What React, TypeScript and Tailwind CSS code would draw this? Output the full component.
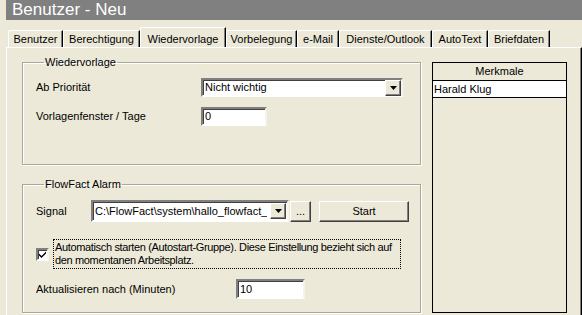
import React from "react";

const tabs = [
  { label: "Benutzer", w: "w-[55px]" },
  { label: "Berechtigung", w: "w-[77px]" },
  { label: "Wiedervorlage", w: "w-[86px]", active: true },
  { label: "Vorbelegung", w: "w-[71px]" },
  { label: "e-Mail", w: "w-[42px]" },
  { label: "Dienste/Outlook", w: "w-[93px]" },
  { label: "AutoText", w: "w-[56px]" },
  { label: "Briefdaten", w: "w-[62px]" },
];

const sunken =
  "border-2 border-t-[#808080] border-l-[#808080] border-b-white border-r-[#f4f3ee] shadow-[inset_1px_1px_0_#404040] bg-white";
const raised =
  "border border-t-white border-l-white border-b-[#404040] border-r-[#404040] shadow-[inset_-1px_-1px_0_#808080] bg-[#ece9d8]";
const group =
  "border border-[#aca899] shadow-[1px_1px_0_white,inset_1px_1px_0_white] rounded-none";

const DropArrow = () => (
  <div className={`${raised} w-[16px] h-[16px] flex items-center justify-center shrink-0`}>
    <svg width="7" height="4" viewBox="0 0 7 4">
      <path d="M0 0h7L3.5 4z" fill="black" />
    </svg>
  </div>
);

const App = () => {
  return (
    <div
      className="w-[582px] h-[315px] overflow-hidden bg-[#ece9d8] pl-[6px] text-[11px] text-black"
      style={{ fontFamily: '"Liberation Sans", Arial, sans-serif' }}
    >
      <div className="h-[20px] bg-[#808080] text-white text-[17px] leading-[20px] pl-[6px]">
        Benutzer - Neu
      </div>

      <div className="flex items-end h-[27px] pl-[2px]">
        {tabs.map((t) => (
          <div
            key={t.label}
            className={`${t.w} ${
              t.active ? "h-[20px] pt-[3px]" : "h-[17px]"
            } border-t border-l border-white border-r border-r-black shadow-[inset_-1px_0_0_#808080] flex items-center justify-center leading-[13px] rounded-tl-[2px]`}
          >
            {t.label}
          </div>
        ))}
      </div>

      <div className="h-[280px] border-t border-l border-white border-r border-r-black shadow-[inset_-1px_0_0_#808080] flex pl-[15px]">
        <div className="w-[399px] flex flex-col pt-[7px]">
          <fieldset className={`${group} h-[110px] pl-[13px] pr-[16px]`}>
            <legend className="ml-[8px] px-[1px] leading-[14px]">Wiedervorlage</legend>
            <div className="flex items-center mt-[9px]">
              <div className="w-[165px]">Ab Priorität</div>
              <div className={`${sunken} w-[202px] h-[19px] flex items-center justify-between pl-[2px] pr-[0px]`}>
                <span>Nicht wichtig</span>
                <DropArrow />
              </div>
            </div>
            <div className="flex items-center mt-[10px]">
              <div className="w-[165px]">Vorlagenfenster / Tage</div>
              <div className={`${sunken} w-[66px] h-[19px] flex items-center pl-[2px]`}>0</div>
            </div>
          </fieldset>

          <fieldset className={`${group} h-[136px] mt-[12px] pl-[13px] pr-[10px]`}>
            <legend className="ml-[8px] px-[1px] leading-[14px]">FlowFact Alarm</legend>
            <div className="flex items-center mt-[9px]">
              <div className="w-[55px]">Signal</div>
              <div className={`${sunken} w-[198px] h-[22px] flex items-center justify-between pl-[2px] pr-[1px]`}>
                <span className="whitespace-nowrap overflow-hidden">C:\FlowFact\system\hallo_flowfact_</span>
                <DropArrow />
              </div>
              <div className={`${raised} w-[21px] h-[21px] ml-[1px] flex items-center justify-center`}>
                ...
              </div>
              <div className={`${raised} w-[90px] h-[21px] ml-[8px] flex items-center justify-center`}>
                Start
              </div>
            </div>

            <div className="flex items-center mt-[17px]">
              <div className={`${sunken} w-[13px] h-[13px] flex items-center justify-center shrink-0`}>
                <svg width="7" height="7" viewBox="0 0 7 7">
                  <path d="M0 2.5l2.5 2.5L7 0.5v2L2.5 7 0 4.5z" fill="black" />
                </svg>
              </div>
              <div className="ml-[4px] w-[348px] h-[30px] border border-dotted border-black leading-[13px] pl-[1px] pt-[1px] tracking-[-0.35px] whitespace-nowrap">
                Automatisch starten (Autostart-Gruppe). Diese Einstellung bezieht sich auf
                <br />
                den momentanen Arbeitsplatz.
              </div>
            </div>

            <div className="flex items-center mt-[10px]">
              <div className="w-[200px]">Aktualisieren nach (Minuten)</div>
              <div className={`${sunken} w-[69px] h-[20px] flex items-center pl-[2px]`}>10</div>
            </div>
          </fieldset>
        </div>

        <div className="w-[135px] h-[251px] mt-[14px] ml-[11px] border border-black flex flex-col">
          <div className="h-[18px] border-b border-black flex items-center justify-center">Merkmale</div>
          <div className="h-[17px] bg-white border-b border-black flex items-center pl-[1px]">
            Harald Klug
          </div>
        </div>
      </div>
    </div>
  );
};

export default App;
